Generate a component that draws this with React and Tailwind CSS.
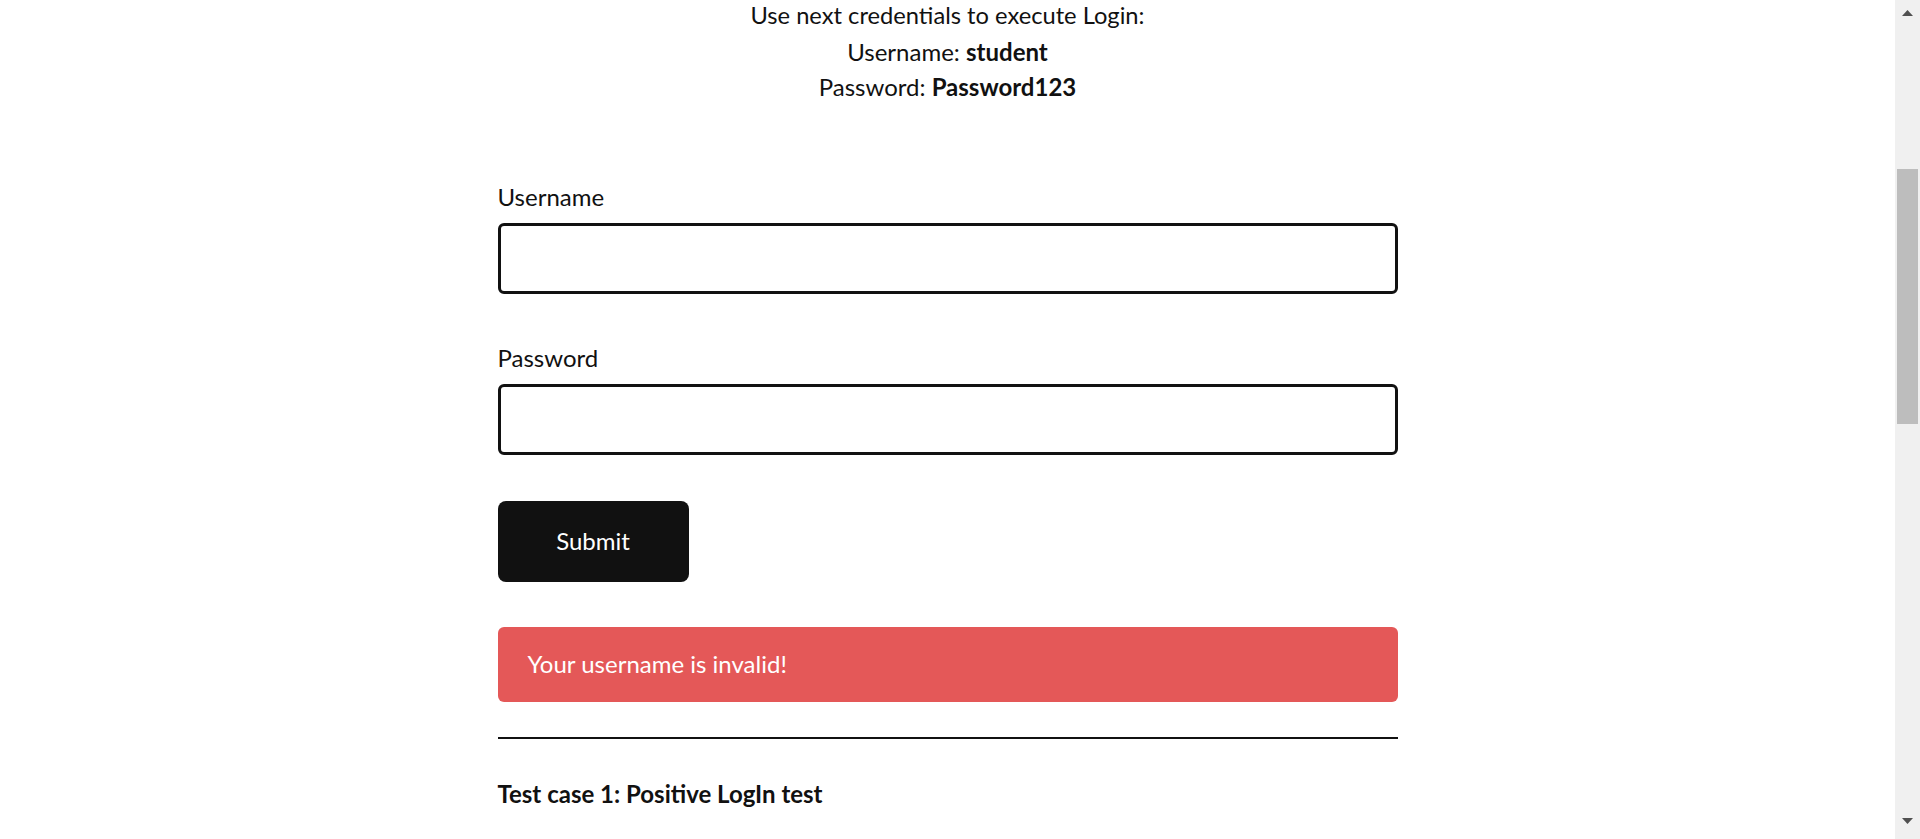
import React from 'react';

const Scrollbar = () => (
  <div className="flex h-[839px] w-[25px] shrink-0 flex-col bg-[#f0f0f0]">
    <div className="flex h-[25px] items-start justify-center pt-[10px]">
      <svg width="11" height="6" viewBox="0 0 11 6">
        <path d="M5.5 0 L11 6 L0 6 Z" fill="#505050" />
      </svg>
    </div>
    <div className="mx-[2px] mt-[144px] h-[255px] bg-[#bdbdbd]" />
    <div className="flex-1" />
    <div className="flex h-[25px] items-start justify-center pt-[4px]">
      <svg width="11" height="6" viewBox="0 0 11 6">
        <path d="M0 0 L11 0 L5.5 6 Z" fill="#505050" />
      </svg>
    </div>
  </div>
);

const Field = ({ label, type, className }) => (
  <div className={className}>
    <label className="block leading-[36px]">{label}</label>
    <input
      type={type}
      className="mt-[8px] block h-[71px] w-full rounded-[6px] border-[3px] border-[#111] bg-white outline-none"
    />
  </div>
);

export default function App() {
  return (
    <div className="flex h-[839px] overflow-hidden bg-white font-[Lato,sans-serif] text-[24px] text-[#111]">
      <main className="flex-1">
        <div className="mt-[-2px] text-center leading-[35.5px]">
          <p className="text-[23.7px]">Use next credentials to execute Login:</p>
          <p>
            Username: <strong className="font-bold">student</strong>
          </p>
          <p>
            Password: <strong className="font-bold">Password123</strong>
          </p>
        </div>

        <section className="mx-auto w-[900px]">
          <Field label="Username" type="text" className="mt-[74px]" />
          <Field label="Password" type="password" className="mt-[46px]" />

          <button className="mt-[46px] h-[81px] w-[191px] rounded-[8px] bg-[#111] text-white">
            Submit
          </button>

          <div className="mt-[45px] flex h-[75px] items-center rounded-[6px] bg-[#e45858] px-[30px] text-white">
            Your username is invalid!
          </div>

          <div className="mt-[35px] h-[2px] bg-[#111]" />

          <h2 className="mt-[37px] font-bold leading-[36px]">Test case 1: Positive LogIn test</h2>
        </section>
      </main>
      <Scrollbar />
    </div>
  );
}
